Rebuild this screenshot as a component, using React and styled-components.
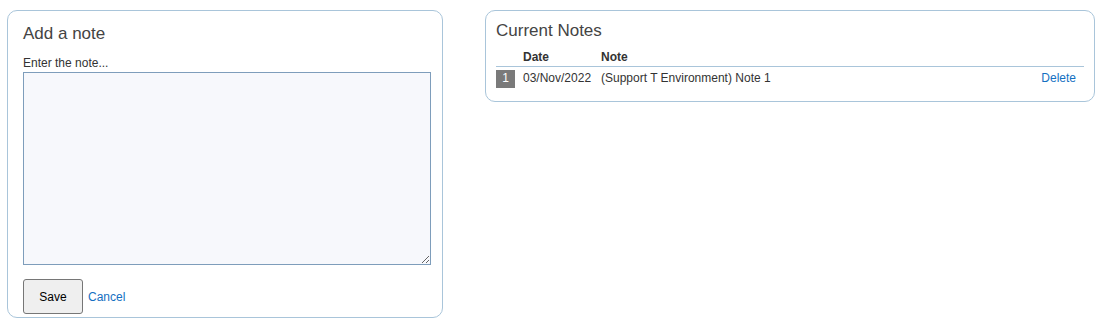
import React from 'react';
import styled, { createGlobalStyle } from 'styled-components';

const GlobalStyle = createGlobalStyle`
  body {
    margin: 0;
    background: #ffffff;
    font-family: 'Liberation Sans', Arial, sans-serif;
    font-size: 12px;
    color: #333333;
  }
`;

const Page = styled.div`
  display: flex;
  align-items: flex-start;
  gap: 42px;
  padding: 10px 8px 0 7px;
`;

const Panel = styled.div`
  box-sizing: border-box;
  width: ${(p) => p.width}px;
  border: 1px solid #a9c5da;
  border-radius: 10px;
  background: #ffffff;
`;

const NotePanel = styled(Panel)`
  padding: 13px 10px 3px 15px;
`;

const ListPanel = styled(Panel)`
  padding: 10px 10px 10px 10px;
`;

const Heading = styled.h2`
  margin: 0 0 ${(p) => p.gap}px;
  font-size: 17px;
  font-weight: normal;
  line-height: 20px;
  color: #444444;
`;

const Label = styled.label`
  display: block;
  font-size: 12px;
  line-height: 14px;
  margin-bottom: 2px;
  color: #333333;
`;

const NoteInput = styled.textarea`
  display: block;
  box-sizing: border-box;
  width: 408px;
  height: 193px;
  margin: 0;
  border: 1px solid #7e9dbb;
  background: #f7f8fc;
  font-family: 'Liberation Sans', Arial, sans-serif;
  font-size: 12px;
  outline: none;
`;

const Actions = styled.div`
  display: flex;
  align-items: center;
  gap: 5px;
  margin-top: 14px;
`;

const Button = styled.button`
  width: 60px;
  height: 35px;
  border: 1px solid #767676;
  border-radius: 3px;
  background: #efefef;
  color: #000000;
  font-family: 'Liberation Sans', Arial, sans-serif;
  font-size: 12px;
  padding: 0;
`;

const Link = styled.a`
  color: #1470c2;
  font-size: 12px;
  text-decoration: none;
  cursor: pointer;
`;

const Grid = styled.div`
  display: grid;
  grid-template-columns: 27px 78px 1fr auto;
  align-items: center;
`;

const HeadCell = styled.div`
  align-self: stretch;
  height: 18px;
  font-weight: bold;
  line-height: 18px;
  border-bottom: 1px solid #a9c5da;
  color: #333333;
`;

const Cell = styled.div`
  line-height: 21px;
  padding: 1px 0 2px;
  text-align: ${(p) => (p.right ? 'right' : 'left')};
  padding-right: ${(p) => (p.right ? '8px' : '0')};
`;

const Badge = styled.span`
  display: flex;
  align-items: center;
  justify-content: center;
  width: 19px;
  height: 18px;
  background: #7a7a7a;
  color: #ffffff;
  font-size: 12px;
`;

const notes = [{ id: 1, date: '03/Nov/2022', text: '(Support T Environment) Note 1' }];

export default function App() {
  return (
    <>
      <GlobalStyle />
      <Page>
        <NotePanel width={436}>
          <Heading gap={12}>Add a note</Heading>
          <Label htmlFor="note">Enter the note...</Label>
          <NoteInput id="note" />
          <Actions>
            <Button>Save</Button>
            <Link>Cancel</Link>
          </Actions>
        </NotePanel>
        <ListPanel width={610}>
          <Heading gap={7}>Current Notes</Heading>
          <Grid>
            <HeadCell />
            <HeadCell>Date</HeadCell>
            <HeadCell>Note</HeadCell>
            <HeadCell />
            {notes.map((n) => (
              <React.Fragment key={n.id}>
                <Cell><Badge>{n.id}</Badge></Cell>
                <Cell>{n.date}</Cell>
                <Cell>{n.text}</Cell>
                <Cell right><Link>Delete</Link></Cell>
              </React.Fragment>
            ))}
          </Grid>
        </ListPanel>
      </Page>
    </>
  );
}
